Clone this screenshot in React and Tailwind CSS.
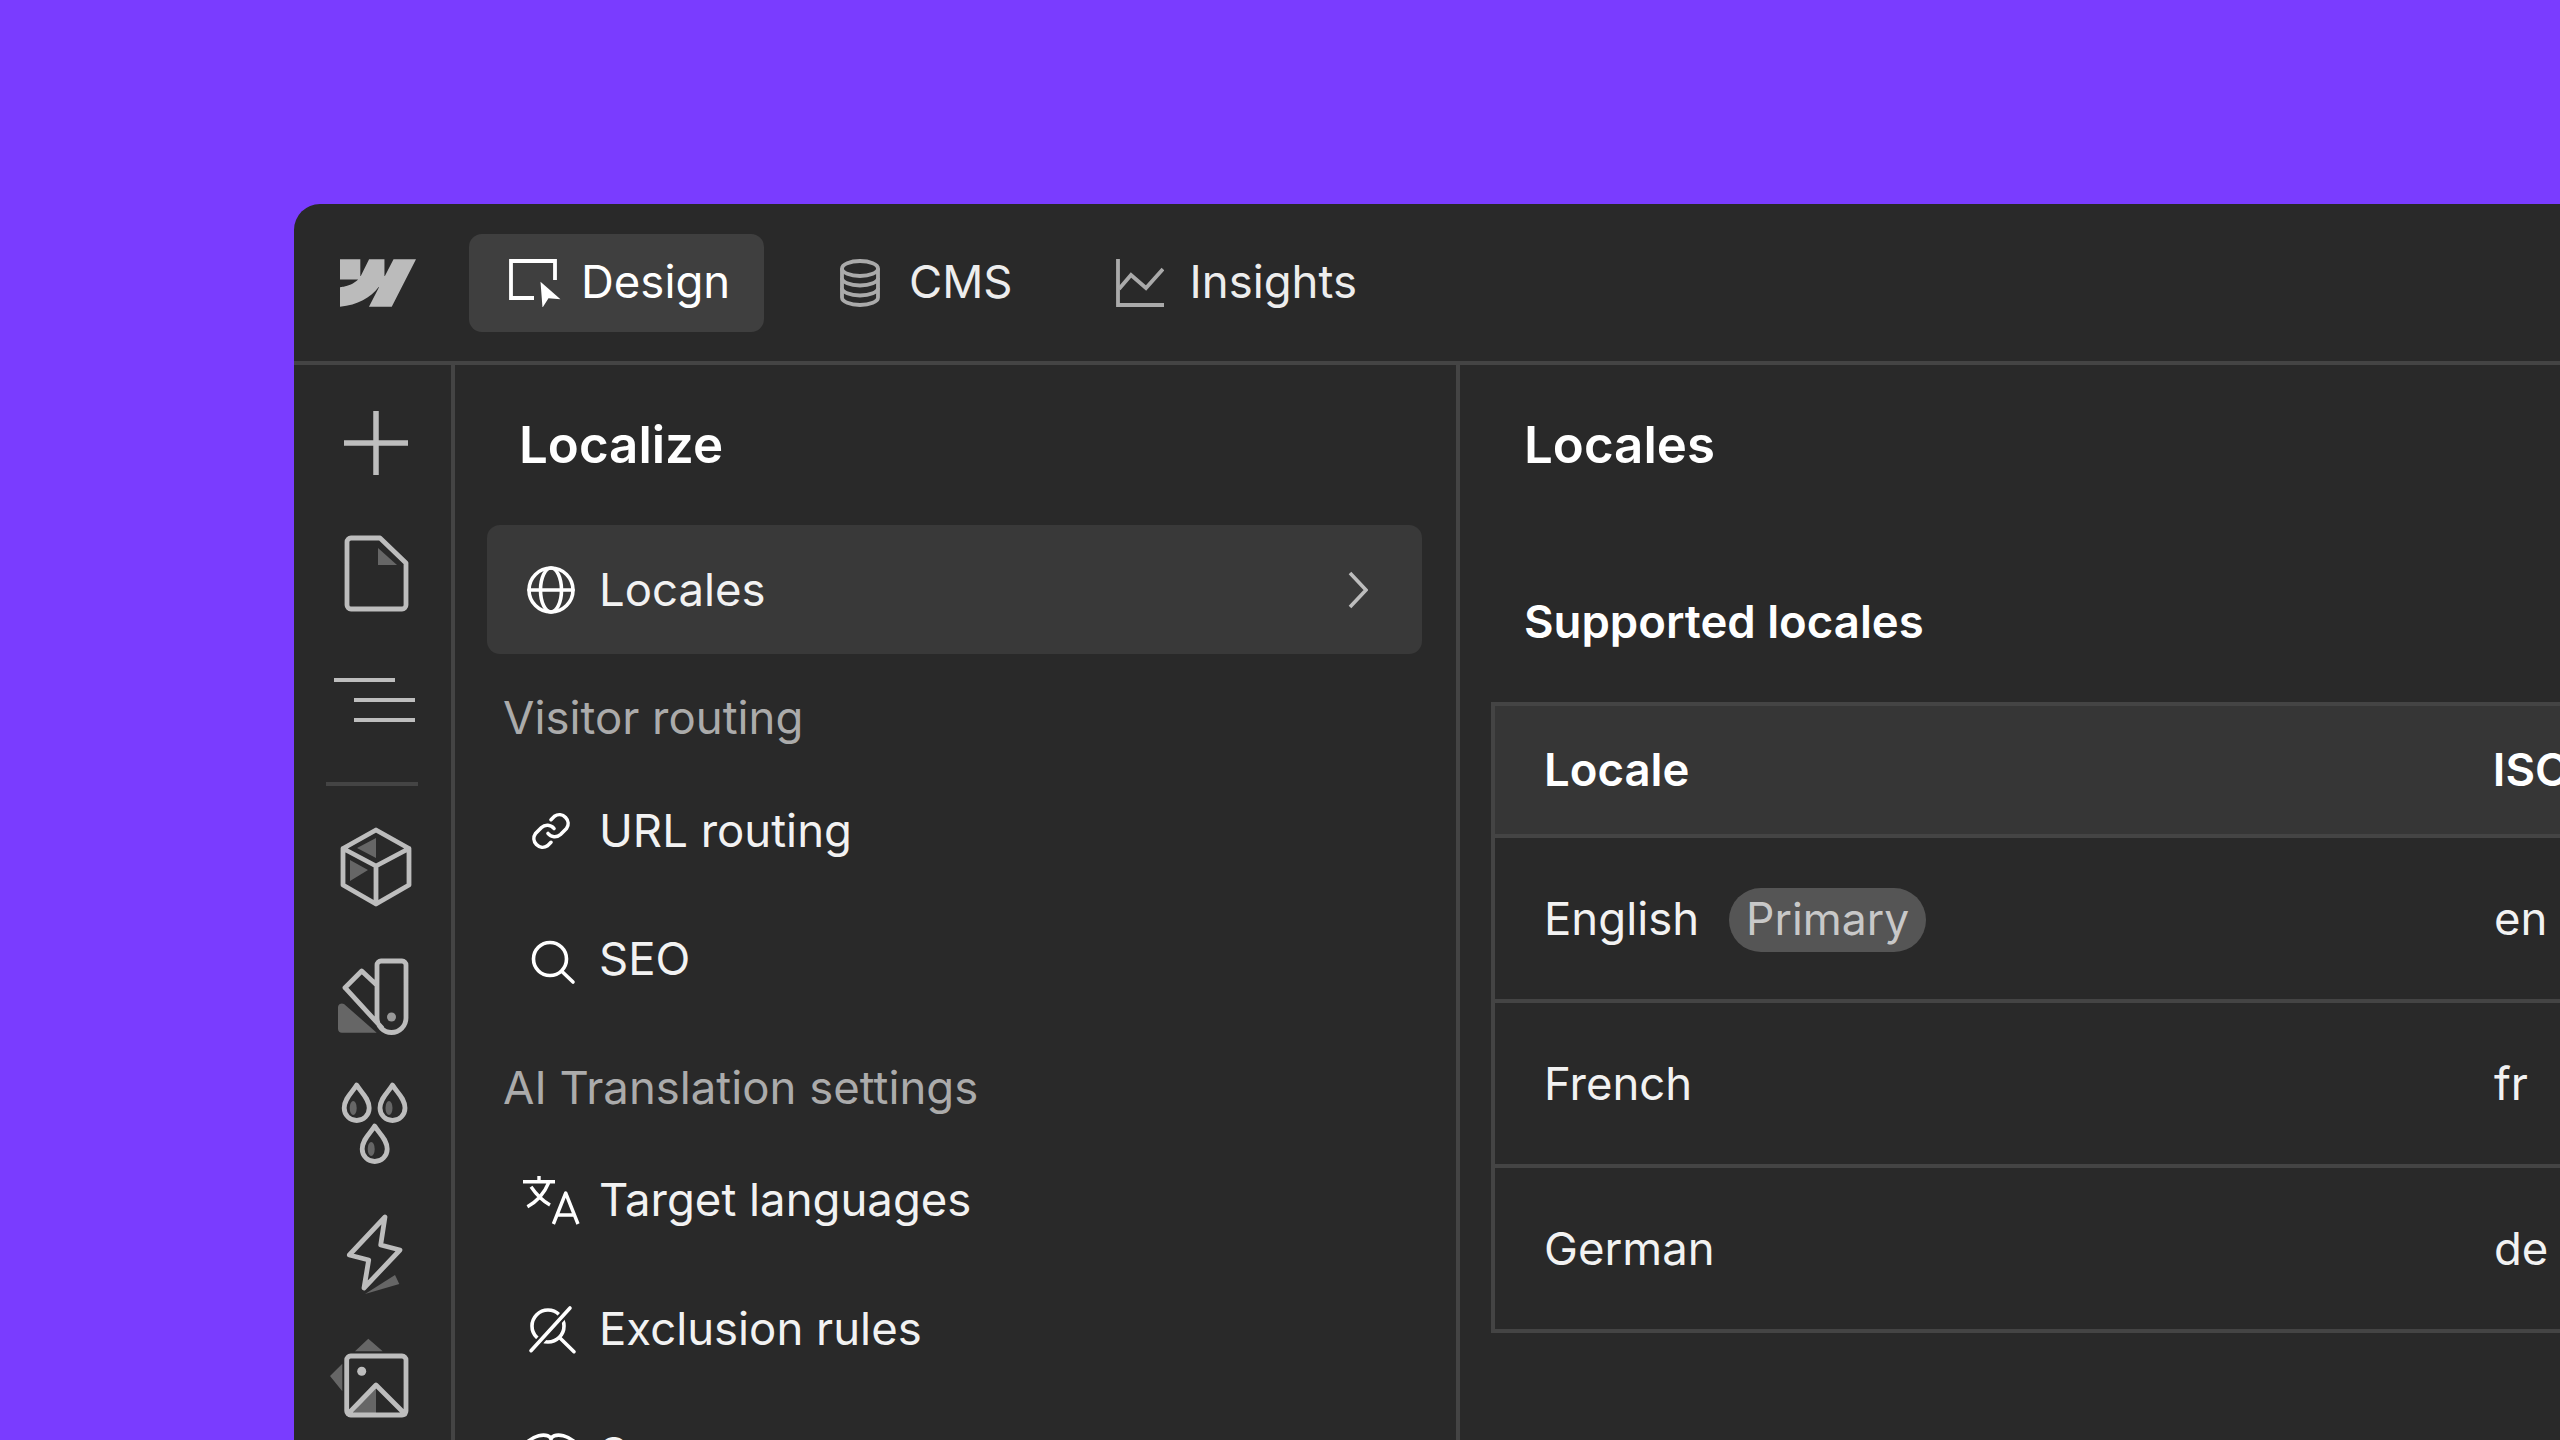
import React from "react";

const G = "#666666";
const S = "#bdbdbd";

function Rail({ children }) {
  return (
    <svg viewBox="0 0 96 96" fill="none" stroke={S} strokeWidth="4.8" strokeLinecap="round" strokeLinejoin="round" className="w-[96px] h-[96px] shrink-0">
      {children}
    </svg>
  );
}

function Drop({ c, t }) {
  const d = `M${c} ${t} C${c + 4} ${t + 7} ${c + 12.5} ${t + 13} ${c + 12.5} ${t + 23} A12.5 12.5 0 0 1 ${c - 12.5} ${t + 23} C${c - 12.5} ${t + 13} ${c - 4} ${t + 7} ${c} ${t} Z`;
  return (
    <>
      <ellipse cx={c - 3.5} cy={t + 23} rx="3.5" ry="7" fill={G} stroke="none" />
      <path d={d} />
    </>
  );
}

function NavIcon({ children }) {
  return (
    <svg viewBox="0 0 48 48" fill="none" stroke="#ffffff" strokeWidth="3.6" strokeLinecap="round" strokeLinejoin="round" className="w-[48px] h-[48px] shrink-0 overflow-visible">
      {children}
    </svg>
  );
}

const GlobeIcon = (
  <NavIcon>
    <circle cx="24" cy="24" r="22" />
    <ellipse cx="24" cy="24" rx="10.5" ry="22" />
    <path d="M2 24H46" />
  </NavIcon>
);
const LinkIcon = (
  <NavIcon>
    <path d="M21 26.5A8.5 8.5 0 0 0 33.5 27.5L39.5 21.5A8.7 8.7 0 0 0 27.5 9.3L24 12.7" />
    <path d="M27 21.5A8.5 8.5 0 0 0 14.5 20.5L8.5 26.5A8.7 8.7 0 0 0 20.5 38.7L24 35.3" />
  </NavIcon>
);
const SearchIcon = (
  <NavIcon>
    <circle cx="23" cy="24" r="16.5" />
    <path d="M35 36.5L46 47" />
  </NavIcon>
);
const TranslateIcon = (
  <NavIcon>
    <path d="M-4 5.7H28M12 0V5.7M21.5 7C17 18 9 26 .4 30.7M4 10.7C9 18 16 25 23 29" strokeLinecap="butt" strokeWidth="3.4" />
    <path d="M26.4 48L38.7 17L51 48M30 39H47.5" strokeLinecap="butt" strokeWidth="3.4" />
  </NavIcon>
);
const ExcludeIcon = (
  <NavIcon>
    <circle cx="21" cy="21" r="16" />
    <path d="M33 33L47 46.7" />
    <path d="M43 3L4 45.7" stroke="#292929" strokeWidth="8" />
    <path d="M43 3L4 45.7" />
  </NavIcon>
);
const BookIcon = (
  <NavIcon>
    <path d="M-2 14C6 6 18 2 24 8C30 2 42 6 50 14V46H-2Z" />
    <path d="M24 8V46" />
  </NavIcon>
);

function NavRow({ icon, label, className = "" }) {
  return (
    <div className={"h-[128.5px] flex items-center gap-[24px] pl-[40px] text-[45.5px] text-[#f2f2f2] " + className}>
      {icon}
      <span className="whitespace-nowrap">{label}</span>
    </div>
  );
}

function SectionLabel({ children }) {
  return <div className="h-[112.5px] pt-[16px] flex items-center pl-[16px] text-[45.5px] text-[#ababab]">{children}</div>;
}

function TableRow({ name, iso, badge }) {
  return (
    <div className="h-[165px] border-b-[4px] border-[#444444] pt-[2px] flex items-center pl-[49px] text-[45.5px] text-[#f2f2f2]">
      <div className="w-[950px] flex items-center gap-[30px]">
        <span>{name}</span>
        {badge && (
          <span className="h-[64px] px-[17px] flex items-center rounded-full bg-[#555555] text-[44.5px] text-[#c8c8c8]">{badge}</span>
        )}
      </div>
      <span>{iso}</span>
    </div>
  );
}

export default function App() {
  return (
    <div className="w-[2560px] h-[1440px] overflow-hidden bg-[#7a3cff] pl-[294px] pt-[204px]" style={{ fontFamily: "Inter, 'Noto Sans', sans-serif" }}>
      <div className="w-[2266px] h-[1236px] bg-[#292929] rounded-tl-[26px] flex flex-col">
        {/* top bar */}
        <header className="h-[161px] shrink-0 border-b-[4px] border-[#444444] flex items-center text-[45.5px]">
          <svg viewBox="0 0 1080 674" className="w-[76px] h-[48px] ml-[46px] shrink-0" fill="#bbbbbb">
            <path d="M1080 0L735.386 673.684H411.695L555.916 394.481H549.445C430.464 548.934 252.942 650.61 0 673.684V398.344C0 398.344 161.813 388.787 256.939 288.776H0V0.0053214H288.771V237.515L295.253 237.488L413.255 0.0053214H631.645V236.009L638.126 235.999L760.556 0H1080Z" />
          </svg>
          <div className="ml-[53px] h-[98px] w-[295px] rounded-[13px] bg-[#3f3f3f] flex items-center pl-[40px] gap-[20px] text-white">
            <svg viewBox="0 0 52 48" fill="none" className="w-[52px] h-[48px] shrink-0">
              <path d="M25 39H2V2H46V21" stroke="#ffffff" strokeWidth="3.8" />
              <path d="M31.5 22.7L51.5 40.3L39.5 39.3L33.5 48.7Z" fill="#ffffff" />
            </svg>
            <span>Design</span>
          </div>
          <div className="ml-[76px] flex items-center gap-[29px] text-[#ededed]">
            <svg viewBox="0 0 40 48" fill="none" stroke="#aaaaaa" strokeWidth="3.8" className="w-[40px] h-[48px] shrink-0">
              <ellipse cx="20" cy="9.5" rx="18" ry="7.5" />
              <path d="M2 9.5V38.5C2 42.6 10 46 20 46S38 42.6 38 38.5V9.5" />
              <path d="M2 19C2 23 10 26.5 20 26.5S38 23 38 19" />
              <path d="M2 29C2 33 10 36.5 20 36.5S38 33 38 29" />
            </svg>
            <span>CMS</span>
          </div>
          <div className="ml-[103px] flex items-center gap-[26px] text-[#ededed]">
            <svg viewBox="0 0 48 48" fill="none" stroke="#aaaaaa" strokeWidth="3.8" className="w-[48px] h-[48px] shrink-0">
              <path d="M2 0V46H48" />
              <path d="M3 30L15 16L30 29L47 10" />
            </svg>
            <span>Insights</span>
          </div>
        </header>

        <div className="flex flex-1 min-h-0">
          {/* icon rail */}
          <aside className="w-[161px] shrink-0 border-r-[4px] border-[#444444] flex flex-col items-start pl-[34px] pt-[13px]">
            <div className="h-[130px] flex items-center shrink-0">
              <Rail>
                <path d="M16 48H80M48 16V80" strokeWidth="5.5" strokeLinecap="butt" />
              </Rail>
            </div>
            <div className="h-[130px] flex items-center shrink-0">
              <Rail>
                <path d="M50 23V40H69Z" fill={G} stroke="none" />
                <path d="M23 13H52L78 38V80A4 4 0 0 1 74 84H23A4 4 0 0 1 19 80V17A4 4 0 0 1 23 13Z" />
              </Rail>
            </div>
            <div className="h-[124px] flex items-center shrink-0">
              <Rail>
                <path d="M6 28H67M26 48H87M26 68H87" strokeWidth="4" strokeLinecap="butt" />
              </Rail>
            </div>
            <div className="w-[92px] h-[4px] bg-[#444444] -ml-[2px] mt-[20px] shrink-0" />
            <div className="h-[129px] flex items-center mt-[16.5px] shrink-0">
              <Rail>
                <path d="M48 19V39L29 29Z M22 41L40 51L22 62Z" fill={G} stroke="none" />
                <path d="M48 11L81 29.5V66L48 85L15 66V29.5Z M15 29.5L48 47L81 29.5 M48 47V85" />
              </Rail>
            </div>
            <div className="h-[129px] flex items-center shrink-0">
              <Rail>
                <path d="M10 60A4 4 0 0 1 16 56L48.7 84.7H14A4 4 0 0 1 10 81Z" fill={G} stroke="none" />
                <path d="M17 39.7L33.7 23L48.7 37 M17 39.7L53.7 79.7 M53 13H74A4 4 0 0 1 78 17V70A14.5 14.5 0 0 1 49 70V17A4 4 0 0 1 53 13Z" />
                <circle cx="63.5" cy="69" r="4.5" fill="#999999" stroke="none" />
              </Rail>
            </div>
            <div className="h-[129px] flex items-center shrink-0">
              <Rail>
                <Drop c={28.7} t={8} />
                <Drop c={64.5} t={8} />
                <Drop c={46.7} t={49} />
              </Rail>
            </div>
            <div className="h-[129px] flex items-center shrink-0">
              <Rail>
                <path d="M67 69L71.3 78L37 88Z" fill={G} stroke="none" />
                <path d="M57 11L52.7 39L72 44L36 82L40.7 54L21.3 49Z" />
              </Rail>
            </div>
            <div className="h-[129px] flex items-center shrink-0">
              <Rail>
                <path d="M27 16.3L40.3 3.7L54.7 16.3Z M14.3 28.7L2 41L14.3 56.3Z M48 50V79H24Z" fill={G} stroke="none" />
                <path d="M22.7 21H74A4 4 0 0 1 78 25V76A4 4 0 0 1 74 80H22.7A4 4 0 0 1 18.7 76V25A4 4 0 0 1 22.7 21Z M20 79L48 50L77 79" />
                <circle cx="33.7" cy="36.3" r="4.5" fill="#bdbdbd" stroke="none" />
              </Rail>
            </div>
          </aside>

          {/* localize nav */}
          <nav className="w-[1005px] shrink-0 border-r-[4px] border-[#444444] pl-[32px] pr-[34px]">
            <div className="h-[160px] flex items-center pl-[32px] text-[51px] font-semibold text-white">Localize</div>
            <div className="h-[129px] rounded-[13px] bg-[#393939] flex items-center justify-between pl-[40px] pr-[54px] text-[45.5px] text-[#f2f2f2]">
              <div className="flex items-center gap-[24px]">
                {GlobeIcon}
                <span className="pt-[2px]">Locales</span>
              </div>
              <svg viewBox="0 0 20 38" fill="none" stroke="#bdbdbd" strokeWidth="3.6" className="w-[20px] h-[38px]">
                <path d="M2 2L18 19L2 36" />
              </svg>
            </div>
            <SectionLabel>Visitor routing</SectionLabel>
            <NavRow icon={LinkIcon} label="URL routing" />
            <NavRow icon={SearchIcon} label="SEO" />
            <SectionLabel>AI Translation settings</SectionLabel>
            <NavRow icon={TranslateIcon} label="Target languages" />
            <NavRow icon={ExcludeIcon} label="Exclusion rules" />
            <NavRow icon={BookIcon} label="Sources" className="-mt-[3px]" />
          </nav>

          {/* locales */}
          <main className="flex-1 min-w-0 pl-[31px]">
            <div className="h-[160px] flex items-center pl-[33px] text-[51px] font-semibold text-white">Locales</div>
            <div className="h-[177px] pt-[63px] pl-[33px] text-[45.5px] font-semibold text-white">Supported locales</div>
            <div className="w-[1200px] border-t-[4px] border-l-[4px] border-[#444444]">
              <div className="h-[132px] bg-[#363636] border-b-[4px] border-[#444444] flex items-center pl-[49px] text-[45.5px] font-semibold text-white">
                <div className="w-[950px]">Locale</div>
                <span className="whitespace-nowrap">ISO code</span>
              </div>
              <TableRow name="English" iso="en" badge="Primary" />
              <TableRow name="French" iso="fr" />
              <TableRow name="German" iso="de" />
            </div>
          </main>
        </div>
      </div>
    </div>
  );
}
